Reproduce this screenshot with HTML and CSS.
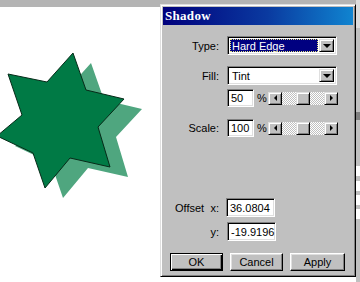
FILE: index.html
```html
<!DOCTYPE html>
<html>
<head>
<meta charset="utf-8">
<link rel="stylesheet" href="styles.css">
</head>
<body>
<div class="screen">
  <div class="canvas">
    <svg class="art" viewBox="0 0 160 282" width="160" height="282">
      <polygon class="shadow" points="91,63 104,100 142,109 116,137 128,177 88,168 63,198 51,163 15,146 40,125 26,84 65,92"/>
      <polygon class="star" points="73,53 86,90 124,99 98,127 110,167 70,158 45,188 33,153 -3,136 22,115 8,74 47,82"/>
    </svg>
  </div>
  <div class="dialog">
    <div class="titlebar"><span>Shadow</span></div>
    <div class="client">
      <div class="row row-type">
        <span class="lbl">Type:</span>
        <div class="select"><span class="sel-value focus">Hard Edge</span><span class="drop"></span></div>
      </div>
      <div class="row row-fill">
        <span class="lbl">Fill:</span>
        <div class="select"><span class="sel-value">Tint</span><span class="drop"></span></div>
      </div>
      <div class="row row-pct">
        <span class="lbl"></span>
        <span class="field w-small">50</span>
        <span class="pct">%</span>
        <div class="scroll"><span class="arrow left"></span><span class="track"><span class="thumb"></span></span><span class="arrow right"></span></div>
      </div>
      <div class="row row-scale">
        <span class="lbl">Scale:</span>
        <span class="field w-small">100</span>
        <span class="pct">%</span>
        <div class="scroll"><span class="arrow left"></span><span class="track"><span class="thumb"></span></span><span class="arrow right"></span></div>
      </div>
      <div class="row row-offx">
        <span class="lbl lbl-split"><span>Offset</span><span>x:</span></span>
        <span class="field w-wide">36.0804</span>
      </div>
      <div class="row row-offy">
        <span class="lbl">y:</span>
        <span class="field w-wide">-19.9196</span>
      </div>
      <div class="buttons">
        <span class="btn btn-default">OK</span>
        <span class="btn">Cancel</span>
        <span class="btn btn-apply">Apply</span>
      </div>
    </div>
  </div>
  <div class="strip">
    <span class="strip-top"></span>
    <span class="strip-cell c1"></span>
    <span class="strip-cell c2"></span>
    <span class="strip-cell c3"></span>
    <span class="strip-cell c4"></span>
    <span class="strip-cell c5"></span>
    <span class="strip-cell c6"></span>
  </div>
</div>
</body>
</html>
```

FILE: styles.css
```css
body {
  margin: 0;
}

.screen {
  width: 360px;
  height: 282px;
  display: flex;
  overflow: hidden;
  background: linear-gradient(#b4b4b4 0 7px, #ffffff 7px);
  font-family: "Liberation Sans", Arial, sans-serif;
  font-size: 11px;
  color: #000;
}

.canvas {
  width: 160px;
  flex: none;
}

.art {
  display: block;
}

.shadow {
  fill: #4fa67f;
}

.star {
  fill: #007a45;
  stroke: #062a18;
  stroke-width: 1;
  stroke-linejoin: miter;
}

.dialog {
  width: 196px;
  height: 273px;
  margin-top: 4px;
  flex: none;
  box-sizing: border-box;
  background: #c0c0c0;
  border: 1px solid;
  border-color: #dfdfdf #000 #000 #dfdfdf;
  box-shadow: inset 1px 1px #fff, inset -1px -1px #808080;
  padding: 2px;
  display: flex;
  flex-direction: column;
}

.titlebar {
  height: 18px;
  flex: none;
  background: linear-gradient(90deg, #00007c 0%, #0a3aa0 55%, #1084d0 100%);
  color: #fff;
  font: bold 13px "Liberation Serif", "Times New Roman", serif;
  letter-spacing: 0.3px;
  display: flex;
  align-items: center;
  padding-left: 2px;
}

.client {
  display: flex;
  flex-direction: column;
}

.row {
  display: flex;
  align-items: center;
  gap: 8px;
}

.row-type { margin-top: 11px; }
.row-fill { margin-top: 11px; }
.row-pct { margin-top: 4px; }
.row-scale { margin-top: 12px; }
.row-offx { margin-top: 61px; }
.row-offy { margin-top: 5px; }

.lbl {
  width: 56px;
  flex: none;
  text-align: right;
}

.lbl-split {
  display: flex;
  justify-content: space-between;
  box-sizing: border-box;
  padding-left: 12px;
  margin-right: -1px;
}

.select {
  width: 110px;
  height: 19px;
  box-sizing: border-box;
  background: #fff;
  border: 1px solid;
  border-color: #808080 #fff #fff #808080;
  box-shadow: inset 1px 1px #000, inset -1px -1px #dfdfdf;
  padding: 2px;
  display: flex;
  align-items: stretch;
}

.sel-value {
  flex: 1;
  display: flex;
  align-items: center;
  padding-left: 2px;
  margin-right: 1px;
}

.sel-value.focus {
  background: #000080;
  color: #fff;
  outline: 1px dotted #e0e080;
  outline-offset: -1px;
}

.drop {
  width: 15px;
  flex: none;
  box-sizing: border-box;
  background: #c0c0c0;
  border: 1px solid;
  border-color: #dfdfdf #000 #000 #dfdfdf;
  box-shadow: inset 1px 1px #fff, inset -1px -1px #808080;
  display: flex;
  align-items: center;
  justify-content: center;
}

.drop::after {
  content: "";
  border-left: 4px solid transparent;
  border-right: 4px solid transparent;
  border-top: 4px solid #000;
  margin-top: 1px;
}

.field {
  height: 18px;
  box-sizing: border-box;
  background: #fff;
  border: 1px solid;
  border-color: #808080 #fff #fff #808080;
  box-shadow: inset 1px 1px #000, inset -1px -1px #dfdfdf;
  padding-left: 3px;
  display: flex;
  align-items: center;
  flex: none;
}

.w-small { width: 27px; }
.w-wide { width: 49px; height: 19px; }

.pct {
  width: 14px;
  flex: none;
  margin-left: -8px;
  margin-right: -8px;
  padding-left: 3px;
  box-sizing: border-box;
}

.scroll {
  width: 70px;
  height: 13px;
  display: flex;
  flex: none;
}

.arrow {
  width: 14px;
  flex: none;
  box-sizing: border-box;
  background: #c0c0c0;
  border: 1px solid;
  border-color: #dfdfdf #000 #000 #dfdfdf;
  box-shadow: inset 1px 1px #fff, inset -1px -1px #808080;
  display: flex;
  align-items: center;
  justify-content: center;
}

.arrow.left::after {
  content: "";
  border-top: 3px solid transparent;
  border-bottom: 3px solid transparent;
  border-right: 3px solid #000;
}

.arrow.right::after {
  content: "";
  border-top: 3px solid transparent;
  border-bottom: 3px solid transparent;
  border-left: 3px solid #000;
}

.track {
  flex: 1;
  display: flex;
  justify-content: center;
  background: repeating-conic-gradient(#ffffff 0 25%, #c0c0c0 0 50%) 0 0 / 2px 2px;
}

.thumb {
  width: 14px;
  box-sizing: border-box;
  background: #c0c0c0;
  border: 1px solid;
  border-color: #dfdfdf #000 #000 #dfdfdf;
  box-shadow: inset 1px 1px #fff, inset -1px -1px #808080;
}

.buttons {
  display: flex;
  gap: 7px;
  margin-top: 12px;
  margin-left: 7px;
}

.btn {
  width: 53px;
  height: 18px;
  box-sizing: border-box;
  background: #c0c0c0;
  border: 1px solid;
  border-color: #fff #000 #000 #fff;
  box-shadow: inset -1px -1px #808080, inset 1px 1px #dfdfdf;
  display: flex;
  align-items: center;
  justify-content: center;
}

.btn-default {
  border-color: #000;
  box-shadow: inset 1px 1px #fff, inset -1px -1px #000, inset -2px -2px #808080;
}

.btn-apply {
  width: 55px;
}

.strip {
  flex: 1;
  background: #c0c0c0;
  display: flex;
  flex-direction: column;
  overflow: hidden;
}

.strip-top {
  height: 28px;
  background: #dcdcdc;
}

.strip-cell {
  display: block;
  height: 10px;
  background: #fff;
  margin-top: 4px;
}

.strip-cell.c1 { margin-top: 84px; background: #808080; height: 8px; }
.strip-cell.c2 { margin-top: 30px; background: #c0c0c0; }
.strip-cell.c3 { margin-top: 6px; }
.strip-cell.c4 { margin-top: 5px; }
.strip-cell.c5 { margin-top: 4px; }
.strip-cell.c6 { margin-top: 4px; }
```
